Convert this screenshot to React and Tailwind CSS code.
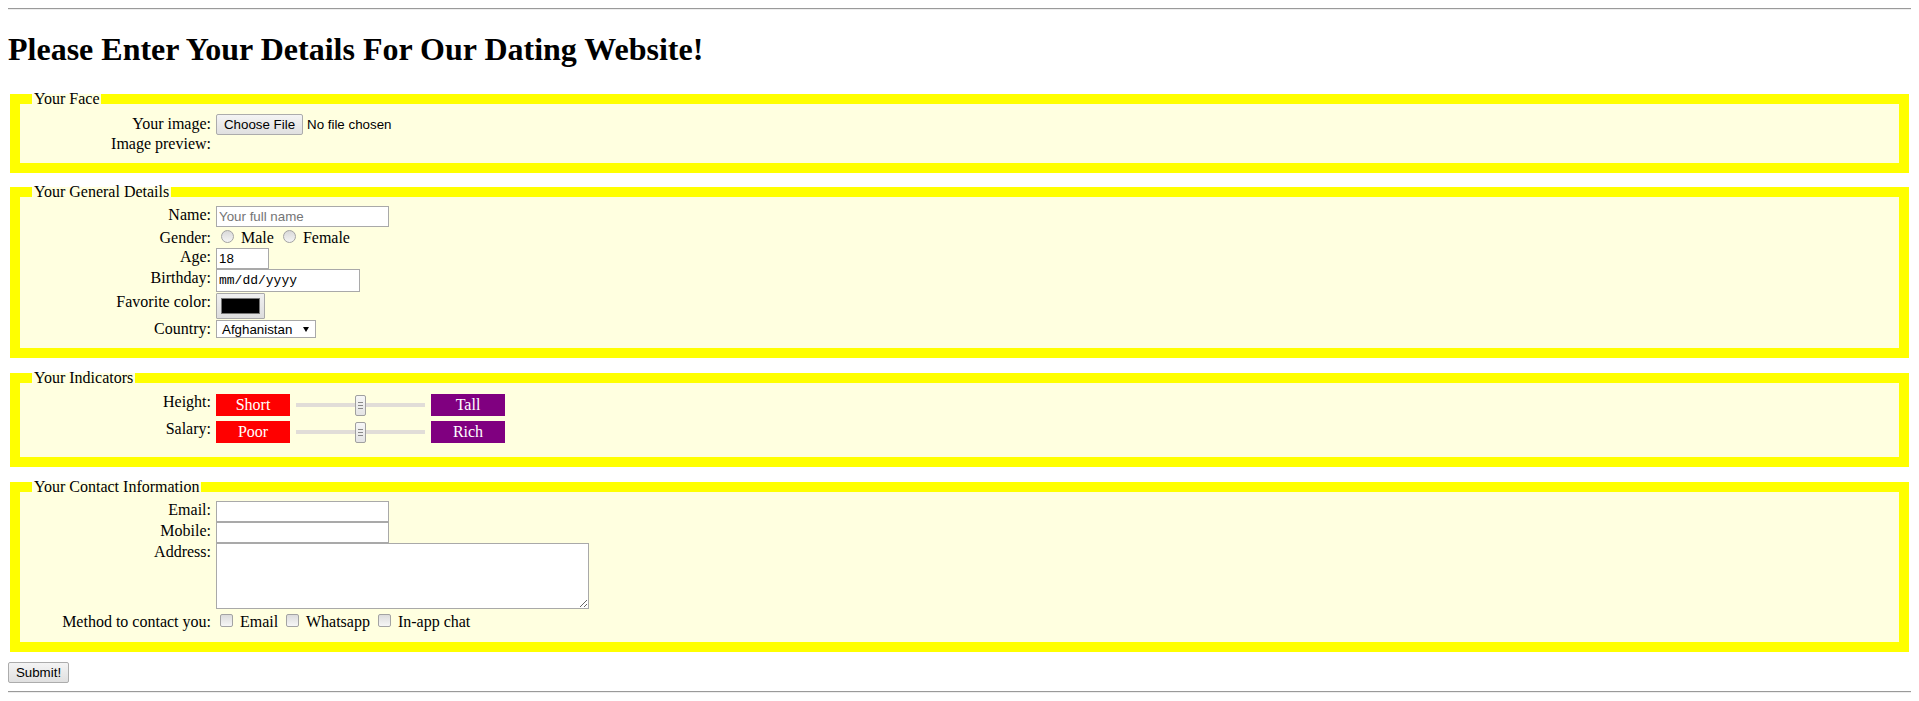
import React from "react";

const Row = ({ label, align = "items-start", h = "", children }) => (
  <div className={`flex ${align} ${h}`}>
    <span className="w-[179px] shrink-0 text-right">{label}</span>
    <div className="ml-[5px]">{children}</div>
  </div>
);

const Radio = () => (
  <span className="inline-block w-[13px] h-[13px] ml-[5px] mr-[3px] mt-[3px] rounded-full border border-[#a3a3a3] bg-gradient-to-b from-[#d9d9d9] to-[#f4f4f4]" />
);

const Check = () => (
  <span className="inline-block w-[13px] h-[13px] ml-[4px] mr-[3px] mt-[3px] rounded-[2px] border border-[#a3a3a3] bg-gradient-to-b from-[#dcdcdc] to-[#f6f6f6]" />
);

const Slider = () => (
  <div className="relative ml-[6px] flex h-[22px] w-[129px] items-center">
    <div className="h-[4px] w-full bg-[#e1ddd8]" />
    <div className="absolute left-[59px] top-[1px] flex h-[21px] w-[11px] flex-col items-center justify-center gap-[2px] rounded-[2px] border border-[#a0a0a0] bg-gradient-to-b from-[#f7f7f7] to-[#e4e4e4]">
      <span className="h-[1px] w-[5px] bg-[#8a8a8a]" />
      <span className="h-[1px] w-[5px] bg-[#8a8a8a]" />
      <span className="h-[1px] w-[5px] bg-[#8a8a8a]" />
    </div>
  </div>
);

const textInput =
  "h-[21px] border border-[#a9a9a9] bg-white px-[2px] font-['Liberation_Sans',Arial,sans-serif] text-[13.333px] outline-none placeholder:text-[#757575]";

export default function App() {
  return (
    <div className="bg-white px-[8px] pt-[8px] font-['Liberation_Serif','Times_New_Roman',serif] text-[16px] leading-[normal] text-black">
      <hr className="border-t border-b border-t-[#9a9a9a] border-b-[#eeeeee]" />
      <h1 className="mt-[21px] mb-[22px] text-[32px] font-bold leading-[normal]">
        Please Enter Your Details For Our Dating Website!
      </h1>

      <fieldset className="mx-[2px] border-[10px] border-[#ffff00] bg-[#ffffe0] px-[12px] pt-[5.6px] pb-[10px]">
        <legend className="px-[2px]">Your Face</legend>
        <Row label="Your image:" align="items-baseline">
          <span className="inline-flex h-[21px] w-[87px] items-center justify-center rounded-[2px] border border-[#acacac] bg-gradient-to-b from-[#f4f4f4] to-[#e0e0e0] align-baseline font-['Liberation_Sans',Arial,sans-serif] text-[13.333px]">
            Choose File
          </span>
          <span className="ml-[4px] font-['Liberation_Sans',Arial,sans-serif] text-[13.333px]">
            No file chosen
          </span>
        </Row>
        <Row label="Image preview:" />
      </fieldset>

      <fieldset className="mx-[2px] mt-[10px] border-[10px] border-[#ffff00] bg-[#ffffe0] px-[12px] pt-[5.6px] pb-[10px]">
        <legend className="px-[2px]">Your General Details</legend>
        <Row label="Name:" h="h-[21px]">
          <input readOnly placeholder="Your full name" className={`${textInput} w-[173px]`} />
        </Row>
        <Row label="Gender:" align="items-baseline" h="h-[21px]">
          <Radio /> Male <Radio /> Female
        </Row>
        <Row label="Age:" h="h-[21px]">
          <input readOnly value="18" className={`${textInput} w-[53px]`} />
        </Row>
        <Row label="Birthday:" h="h-[24px]">
          <div className="flex h-[23px] w-[144px] items-center border border-[#a9a9a9] bg-white pl-[2px] font-['Liberation_Mono','Courier_New',monospace] text-[13px]">
            mm/dd/yyyy
          </div>
        </Row>
        <Row label="Favorite color:" h="h-[27px]">
          <div className="h-[26px] w-[49px] rounded-[1px] border border-[#a9a9a9] bg-gradient-to-b from-[#f0f0f0] to-[#dddddd] p-[4px]">
            <div className="h-[16px] w-[39px] border border-[#777777] bg-black" />
          </div>
        </Row>
        <Row label="Country:" h="h-[18px]">
          <div className="flex h-[18px] w-[100px] items-center justify-between border border-[#a9a9a9] bg-white pl-[5px] pr-[6px] font-['Liberation_Sans',Arial,sans-serif] text-[13.333px]">
            <span>Afghanistan</span>
            <svg width="6" height="5" viewBox="0 0 6 5">
              <polygon points="0,0 6,0 3,5" fill="#000" />
            </svg>
          </div>
        </Row>
      </fieldset>

      <fieldset className="mx-[2px] mt-[11px] border-[10px] border-[#ffff00] bg-[#ffffe0] px-[12px] pt-[5.6px] pb-[10px]">
        <legend className="px-[2px]">Your Indicators</legend>
        {[
          ["Height:", "Short", "Tall"],
          ["Salary:", "Poor", "Rich"],
        ].map(([label, low, high]) => (
          <div key={label} className="flex h-[27px] items-start">
            <span className="w-[179px] shrink-0 text-right">{label}</span>
            <div className="mt-[1.5px] ml-[5px] flex items-center">
              <span className="flex h-[22px] w-[74px] items-center justify-center bg-[#ff0000] text-white">
                {low}
              </span>
              <Slider />
              <span className="ml-[6px] flex h-[22px] w-[74px] items-center justify-center bg-[#800080] text-white">
                {high}
              </span>
            </div>
          </div>
        ))}
      </fieldset>

      <fieldset className="mx-[2px] mt-[11px] border-[10px] border-[#ffff00] bg-[#ffffe0] px-[12px] pt-[5.6px] pb-[10px]">
        <legend className="px-[2px]">Your Contact Information</legend>
        <Row label="Email:" h="h-[21px]">
          <input readOnly className={`${textInput} w-[173px]`} />
        </Row>
        <Row label="Mobile:" h="h-[21px]">
          <input readOnly className={`${textInput} w-[173px]`} />
        </Row>
        <Row label="Address:" h="h-[66px]">
          <textarea
            readOnly
            className="block h-[66px] w-[373px] resize border border-[#a9a9a9] bg-white outline-none"
          />
        </Row>
        <Row label="Method to contact you:" align="items-baseline" h="mt-[2px] h-[21px]">
          <Check /> Email <Check /> Whatsapp <Check /> In-app chat
        </Row>
      </fieldset>

      <div className="mt-[10px] inline-flex h-[21px] w-[61px] items-center justify-center rounded-[2px] border border-[#acacac] bg-gradient-to-b from-[#f4f4f4] to-[#e0e0e0] font-['Liberation_Sans',Arial,sans-serif] text-[13.333px]">
        Submit!
      </div>
      <hr className="mt-[8px] border-t border-b border-t-[#9a9a9a] border-b-[#eeeeee]" />
    </div>
  );
}
